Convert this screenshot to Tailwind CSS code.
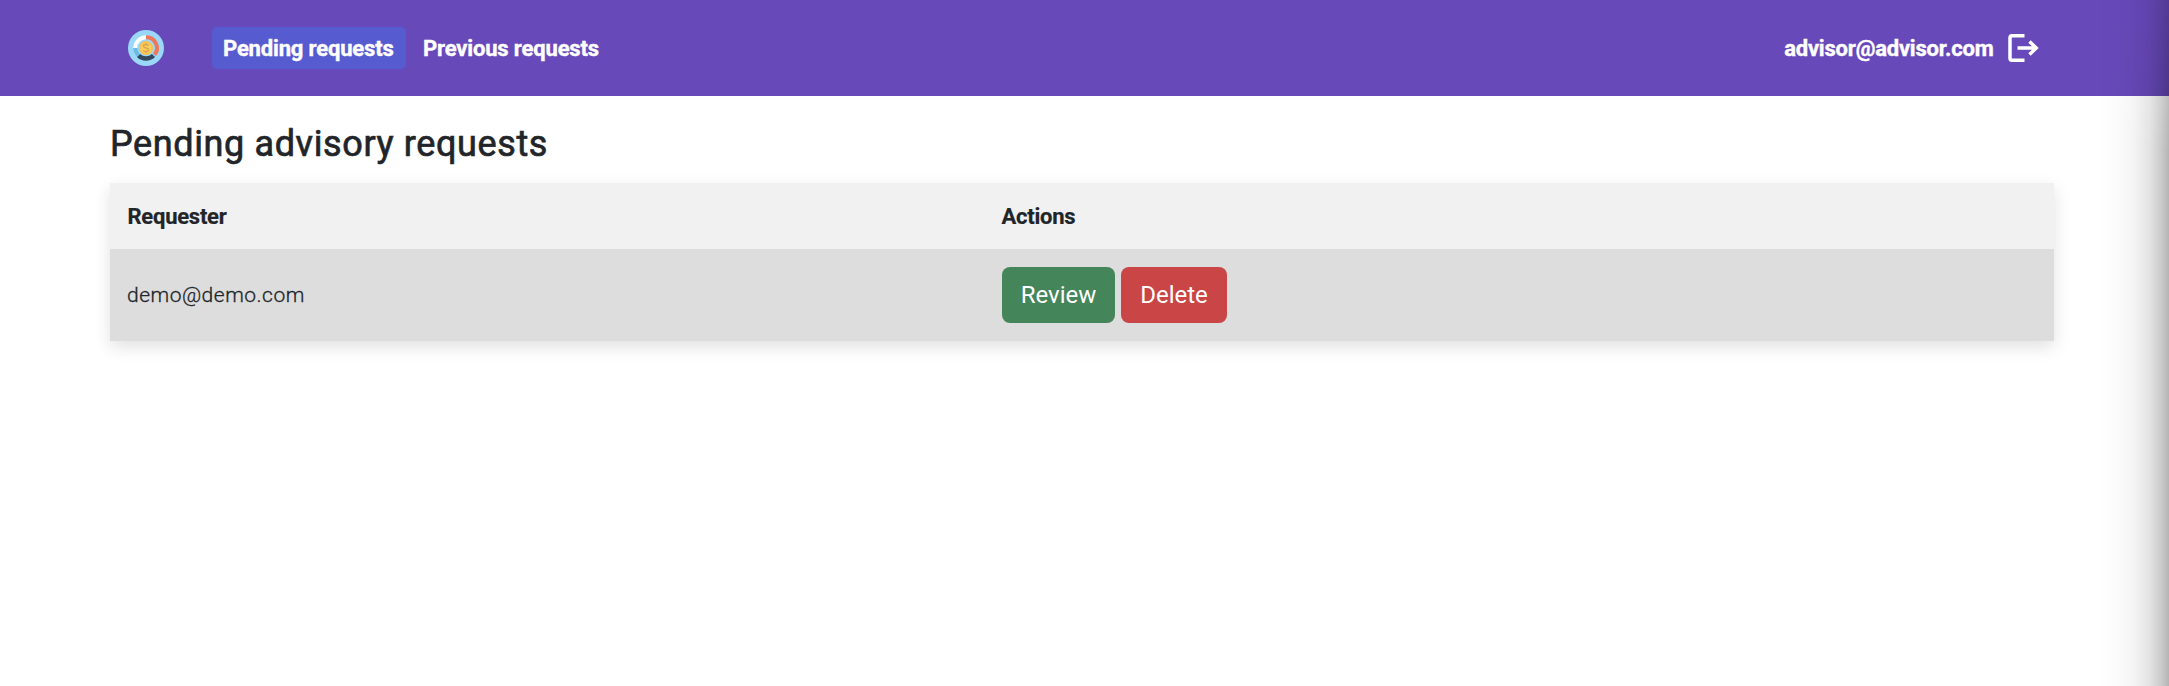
<!DOCTYPE html>
<html lang="en">
<head>
<meta charset="utf-8">
<title>Pending advisory requests</title>
<script src="https://cdn.jsdelivr.net/npm/@tailwindcss/browser@4"></script>
</head>
<body class="relative h-[686px] overflow-hidden bg-white font-['Roboto',sans-serif] text-[#212529]">
<header class="flex h-24 items-center bg-[#6849ba] pl-32 pr-[129px] text-[22px] font-bold tracking-[-0.16px] text-white [-webkit-text-stroke:0.4px_#fff]">
  <svg class="size-9 shrink-0" viewBox="0 0 36 36" fill="none">
    <circle cx="18" cy="18" r="18" fill="#99d8f8"/>
    <path d="M7.300 18A10.700 10.700 0 0 1 18 7.300" stroke="#fff" stroke-width="4"/>
    <path d="M18 7.300A10.700 10.700 0 0 1 26.500 24.800" stroke="#ee7659" stroke-width="4"/>
    <path d="M25.500 25.500A10.700 10.700 0 0 1 10.500 25.500" stroke="#34495e" stroke-width="4.500"/>
    <path d="M10.200 25A10.700 10.700 0 0 1 7.300 18" stroke="#6eb9e3" stroke-width="4"/>
    <circle cx="18" cy="18" r="7" fill="#fbcd5d"/>
    <circle cx="18" cy="18" r="6.200" stroke="#f0b950"/>
    <path d="M20.500 15.500C19.800 14.600 19 14.500 18 14.500C16.600 14.500 15.500 15.100 15.500 16.200C15.500 18.800 20.700 17.200 20.700 19.800C20.700 21 19.500 21.500 18 21.500C16.800 21.500 15.800 21.200 15.200 20.300M18 13V14.500M18 21.500V23" stroke="#dba34b" stroke-width="1.300"/>
  </svg>
  <nav class="ml-12 flex items-center gap-[5px]">
    <a class="flex h-[42px] w-[194px] items-center whitespace-nowrap rounded-[5px] bg-[#565bd0] pl-[11px]">Pending requests</a>
    <a class="flex h-[42px] items-center whitespace-nowrap px-3">Previous requests</a>
  </nav>
  <div class="ml-auto flex items-center gap-[14.5px]">
    <span class="tracking-[-0.2px]">advisor@advisor.com</span>
    <svg class="h-8 w-8" viewBox="0 0 32 32" fill="none" stroke="#fff" stroke-width="3.500">
      <path d="M16.500 3.750H4Q2 3.750 2 5.750V26.250Q2 28.250 4 28.250H16.500"/>
      <path d="M9.500 16H29M21.500 9.500L28.200 16L21.500 22.500"/>
    </svg>
  </div>
</header>
<main class="ml-[110px] w-[1944px] pt-6">
  <h1 class="flex h-[63px] items-start text-[36px] font-normal leading-[48px] tracking-[0.62px] [-webkit-text-stroke:0.7px_#212529]">Pending advisory requests</h1>
  <div class="shadow-[0_6px_16px_rgba(0,0,0,0.12)]">
    <div class="grid h-[66px] grid-cols-[874px_1fr] items-center bg-[#f1f1f1] px-[17.5px] text-[22px] font-bold tracking-[-0.25px] [-webkit-text-stroke:0.2px_#212529]">
      <div>Requester</div>
      <div>Actions</div>
    </div>
    <div class="grid h-[92px] grid-cols-[874px_1fr] items-center bg-[#ddd] px-[18px] text-[21px]">
      <div class="-ml-px pt-0.5 font-light tracking-[0.5px] [-webkit-text-stroke:0.3px_#212529]">demo@demo.com</div>
      <div class="flex gap-[6px] text-2xl text-white">
        <button class="h-14 w-[113px] rounded-lg bg-[#44865a]">Review</button>
        <button class="h-14 w-[106px] rounded-lg bg-[#c94546]">Delete</button>
      </div>
    </div>
  </div>
</main>
<div class="pointer-events-none absolute inset-y-0 right-0 w-[70px] bg-[linear-gradient(to_right,transparent,rgba(0,0,0,0.01)_25%,rgba(0,0,0,0.045)_50%,rgba(0,0,0,0.11)_72%,rgba(0,0,0,0.2)_88%,rgba(0,0,0,0.29))] [mask-image:linear-gradient(to_bottom,rgba(0,0,0,0.7),black_150px)]"></div>
</body>
</html>
